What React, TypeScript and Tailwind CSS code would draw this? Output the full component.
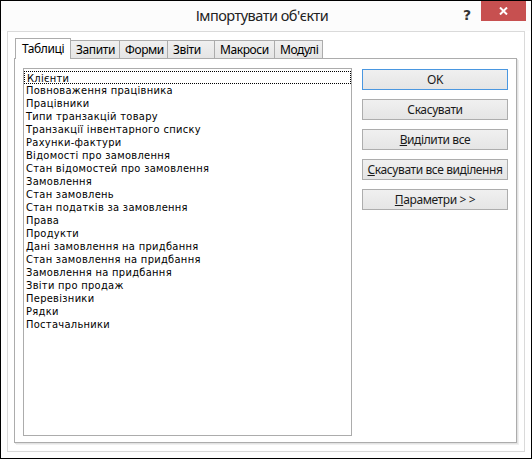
import { FC } from 'react';

const items = [
  'Клієнти',
  'Повноваження працівника',
  'Працівники',
  'Типи транзакцій товару',
  'Транзакції інвентарного списку',
  'Рахунки-фактури',
  'Відомості про замовлення',
  'Стан відомостей про замовлення',
  'Замовлення',
  'Стан замовлень',
  'Стан податків за замовлення',
  'Права',
  'Продукти',
  'Дані замовлення на придбання',
  'Стан замовлення на придбання',
  'Замовлення на придбання',
  'Звіти про продаж',
  'Перевізники',
  'Рядки',
  'Постачальники',
];

const tabs = [
  { label: 'Запити', w: 'w-[50px]' },
  { label: 'Форми', w: 'w-[49px]' },
  { label: 'Звіти', w: 'w-[48px]' },
  { label: 'Макроси', w: 'w-[61px]' },
  { label: 'Модулі', w: 'w-[49px]' },
];

type BtnProps = { children: React.ReactNode; focused?: boolean };

const DlgButton: FC<BtnProps> = ({ children, focused }) => (
  <div
    className={`h-[21px] flex items-center justify-center border bg-gradient-to-b from-[#f0f0f0] to-[#e5e5e5] text-[12px] tracking-[-0.4px] text-[#1a1a1a] ${
      focused ? 'border-[#4a97e0]' : 'border-[#adadad]'
    }`}
  >
    <span className="whitespace-nowrap">{children}</span>
  </div>
);

const App: FC = () => {
  return (
    <div className="w-[532px] h-[459px] border border-black bg-white flex flex-col font-['Noto_Sans',sans-serif] overflow-hidden">
      {/* Title bar */}
      <div className="h-[30px] flex items-start shrink-0 bg-[#fcfcfc]">
        <div className="flex-1 h-full flex items-center justify-center pl-[60px] text-[14.5px] tracking-[-0.5px] text-[#222]">
          Імпортувати об'єкти
        </div>
        <div className="w-[8px] mt-[4px] text-[14px] font-bold text-[#333] font-['DejaVu_Sans',sans-serif] flex justify-center">
          ?
        </div>
        <div className="w-[45px] h-[20px] bg-[#c75050] flex items-center justify-center ml-[10px] mr-[5px]">
          <svg width="9" height="8" viewBox="0 0 9 8">
            <path d="M1 0.5 L8 7.5 M8 0.5 L1 7.5" stroke="#fff" strokeWidth="2" />
          </svg>
        </div>
      </div>

      {/* Frame */}
      <div className="mx-[6px] h-[421px] border border-[#dadada] pt-[6px] pl-[6px] pr-[6px] flex flex-col shrink-0">
        {/* Tab strip */}
        <div className="flex items-end h-[21px] relative z-10 pl-px tracking-[-0.4px]">
          <div className="w-[56px] h-[21px] border border-b-0 border-[#acacac] bg-white pl-[6px] pt-[1px] text-[12px] text-black">
            Таблиці
          </div>
          {tabs.map((t) => (
            <div
              key={t.label}
              className={`${t.w} h-[18px] -ml-px mb-px border border-b-0 border-[#acacac] bg-gradient-to-b from-[#f0f0f0] to-[#e5e5e5] pl-[5px] text-[12px] leading-[17px] text-black`}
            >
              {t.label}
            </div>
          ))}
        </div>

        {/* Panel */}
        <div className="-mt-px h-[385px] w-[503px] border border-[#acacac] bg-white shadow-[1px_1px_0_#e3e3e3,2px_2px_0_#f0f0f0] flex pt-[9px] pl-[8px] pr-[7px]">
          <div className="w-[329px] h-[368px] border border-[#acacac] pt-[2px] font-['DejaVu_Sans_Condensed','DejaVu_Sans',sans-serif] [font-stretch:condensed] text-[11px] tracking-[0.3px] text-black">
            {items.map((it, i) => (
              <div
                key={it}
                className={`h-[13px] leading-[13px] pl-[2px] whitespace-nowrap ${
                  i === 0 ? 'border border-dotted border-black leading-[11px] pl-[1px]' : ''
                }`}
              >
                {it}
              </div>
            ))}
          </div>
          <div className="ml-[10px] mt-px w-[146px] flex flex-col gap-[9px]">
            <DlgButton focused>OK</DlgButton>
            <DlgButton>Скасувати</DlgButton>
            <DlgButton>
              <span className="underline">В</span>иділити все
            </DlgButton>
            <DlgButton>
              <span className="underline">С</span>касувати все виділення
            </DlgButton>
            <DlgButton>
              <span className="underline">П</span>араметри &gt; &gt;
            </DlgButton>
          </div>
        </div>
      </div>
    </div>
  );
};

export default App;
